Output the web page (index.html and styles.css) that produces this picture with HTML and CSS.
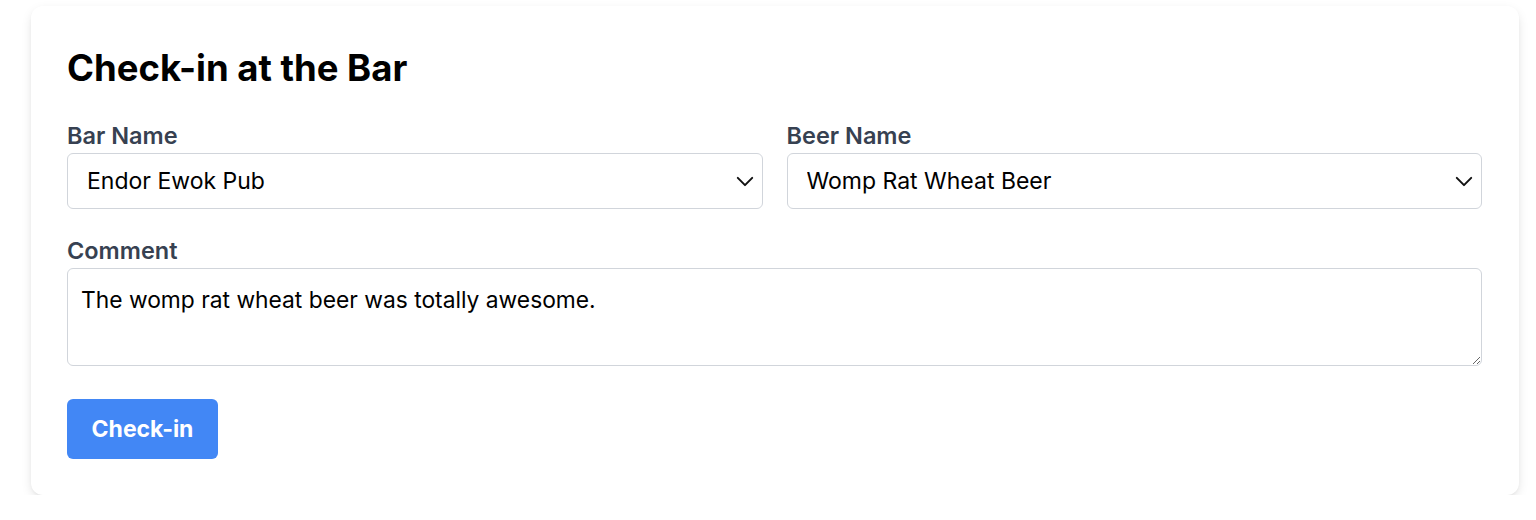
FILE: index.html
```html
<!DOCTYPE html>
<html lang="en">
<head>
<meta charset="utf-8">
<title>Check-in at the Bar</title>
<link rel="stylesheet" href="styles.css">
</head>
<body>
<main class="page">
  <form class="card">
    <h1 class="title">Check-in at the Bar</h1>
    <div class="row">
      <div class="field">
        <label class="label" for="bar">Bar Name</label>
        <div class="select-wrap">
          <select id="bar" class="select">
            <option>Endor Ewok Pub</option>
          </select>
          <svg class="chevron" viewBox="0 0 20 12" width="20" height="12" aria-hidden="true"><path d="M2 2l8 8 8-8" fill="none" stroke="#111" stroke-width="2.2" stroke-linecap="round" stroke-linejoin="round"/></svg>
        </div>
      </div>
      <div class="field">
        <label class="label" for="beer">Beer Name</label>
        <div class="select-wrap">
          <select id="beer" class="select">
            <option>Womp Rat Wheat Beer</option>
          </select>
          <svg class="chevron" viewBox="0 0 20 12" width="20" height="12" aria-hidden="true"><path d="M2 2l8 8 8-8" fill="none" stroke="#111" stroke-width="2.2" stroke-linecap="round" stroke-linejoin="round"/></svg>
        </div>
      </div>
    </div>
    <div class="field">
      <label class="label" for="comment">Comment</label>
      <textarea id="comment" class="textarea">The womp rat wheat beer was totally awesome.</textarea>
    </div>
    <div class="actions">
      <button type="button" class="button">Check-in</button>
    </div>
  </form>
</main>
</body>
</html>
```

FILE: styles.css
```css
* { box-sizing: border-box; }

body {
  margin: 0;
  background: #ffffff;
  font-family: Inter, "Noto Sans", "Liberation Sans", sans-serif;
  color: #000;
}

.page {
  padding: 6px 17px 0 31px;
}

.card {
  background: #fff;
  border-radius: 12px;
  box-shadow: 0 4px 12px -2px rgba(0,0,0,0.15), 0 2px 4px -2px rgba(0,0,0,0.08);
  padding: 42px 37px 36px 36px;
  display: flex;
  flex-direction: column;
}

.title {
  margin: 0 0 34px;
  font-size: 36.5px;
  line-height: 40px;
  font-weight: 700;
  letter-spacing: 0;
}

.row {
  display: grid;
  grid-template-columns: 1fr 1fr;
  gap: 24px;
  margin-bottom: 28px;
}

.field {
  display: flex;
  flex-direction: column;
}

.label {
  font-size: 23.5px;
  line-height: 28px;
  font-weight: 600;
  color: #374151;
  margin-bottom: 3px;
}

.select-wrap {
  position: relative;
}

.select {
  -webkit-appearance: none;
  appearance: none;
  width: 100%;
  height: 56px;
  border: 1px solid #d1d5db;
  border-radius: 6px;
  background: #fff;
  padding: 0 48px 0 19px;
  font-family: inherit;
  font-size: 23px;
  color: #000;
}

.chevron {
  position: absolute;
  right: 9px;
  top: 23px;
  width: 18px;
  height: 11px;
  pointer-events: none;
}

.textarea {
  width: 100%;
  height: 98px;
  border: 1px solid #d1d5db;
  border-radius: 6px;
  padding: 16px 13px;
  font-family: inherit;
  font-size: 22.8px;
  line-height: 30px;
  color: #000;
  resize: vertical;
}

.actions {
  margin-top: 33px;
  display: flex;
}

.button {
  width: 151px;
  height: 60px;
  border: 0;
  border-radius: 6px;
  background: #4287f5;
  color: #fff;
  font-family: inherit;
  font-size: 23px;
  font-weight: 700;
}
```
